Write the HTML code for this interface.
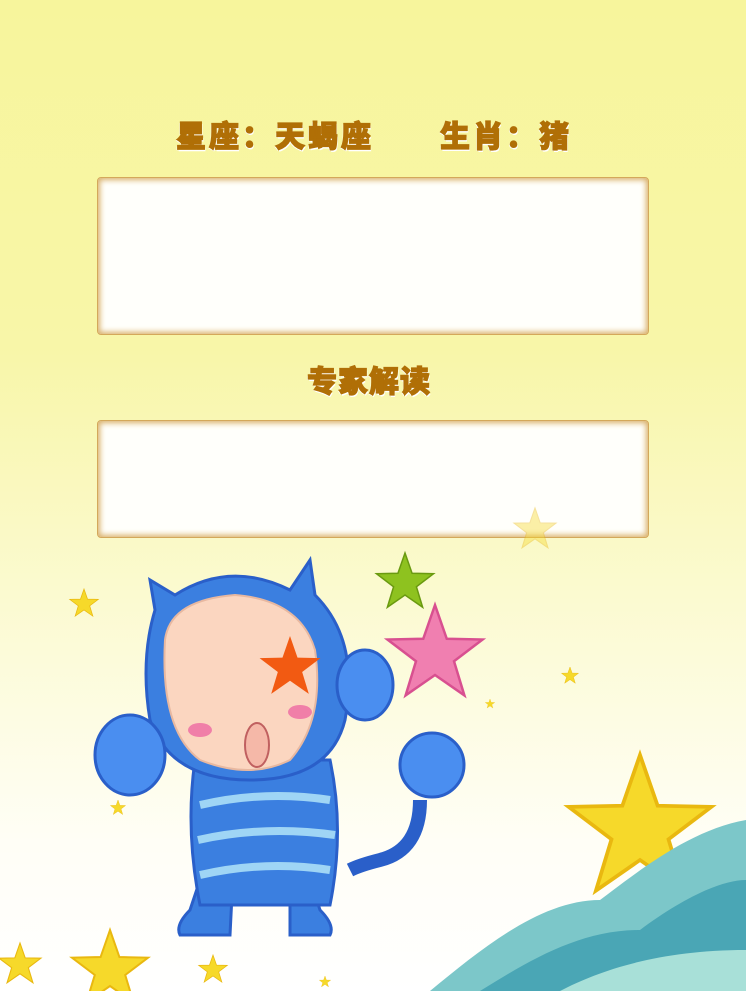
<!DOCTYPE html>
<html><head><meta charset="utf-8"><style>
html,body{margin:0;padding:0}
body{width:746px;height:991px;overflow:hidden;position:relative;background:linear-gradient(#f7f59c 0%,#f8f6a8 35%,#fbfad0 60%,#fffef6 85%,#ffffff 100%);font-family:"Liberation Sans","Noto Sans CJK SC",sans-serif}
.t{position:absolute;color:#b06f06;font-weight:900;font-size:30px;-webkit-text-stroke:1.2px #b06f06;text-shadow:1px 2px 0 #fff,-1px 1px 0 #fff;letter-spacing:3px;white-space:nowrap}
.box{position:absolute;left:97px;width:552px;background:#fffffb;border-radius:4px;box-shadow:inset 0 0 6px 2px #d9b068;border:1px solid #d4a85a;box-sizing:border-box}
svg{position:absolute;left:0;top:0}
</style></head><body>
<div class="t" style="left:176px;top:112px">星座：天蝎座</div>
<div class="t" style="left:440px;top:112px">生肖：猪</div>
<div class="box" style="top:177px;height:158px"></div>
<div class="t" style="left:307px;top:357px;letter-spacing:1px">专家解读</div>
<div class="box" style="top:420px;height:118px"></div>
<svg width="746" height="991" viewBox="0 0 746 991">
<defs><path id="st" d="M0,-1 L0.235,-0.324 0.951,-0.309 0.38,0.124 0.588,0.809 0,0.4 -0.588,0.809 -0.38,0.124 -0.951,-0.309 -0.235,-0.324Z"/></defs>
<g fill="#f6d92a" stroke="#e9b810" stroke-width="0.05">
<use href="#st" transform="translate(84,604) scale(15)"/>
<use href="#st" transform="translate(570,676) scale(9)"/>
<use href="#st" transform="translate(490,704) scale(5)"/>
<use href="#st" transform="translate(118,808) scale(8)"/>
<use href="#st" transform="translate(20,965) scale(22)"/>
<use href="#st" transform="translate(110,970) scale(40)"/>
<use href="#st" transform="translate(213,970) scale(15)"/>
<use href="#st" transform="translate(325,982) scale(6)"/>
<use href="#st" transform="translate(640,830) scale(75)"/>
<use href="#st" transform="translate(720,890) scale(30)"/>
<use href="#st" transform="translate(535,530) scale(22)" opacity="0.4"/>
</g>
<use href="#st" transform="translate(405,583) scale(30)" fill="#8ec21f" stroke="#6a9a10" stroke-width="0.05"/>
<use href="#st" transform="translate(435,655) scale(50)" fill="#f07fb0" stroke="#d85090" stroke-width="0.05"/>
<path d="M430,991 C480,950 540,900 600,900 C640,870 690,830 746,820 L746,991Z" fill="#7cc7c9"/>
<path d="M480,991 C530,960 580,930 640,930 C680,900 720,880 746,880 L746,991Z" fill="#4aa6b5"/>
<path d="M560,991 C600,970 660,950 746,950 L746,991Z" fill="#a8e0d8"/>
<g stroke="#2a5fc9" stroke-width="3">
<path d="M200,880 L190,910 Q175,925 180,935 L230,935 L232,895Z" fill="#3b7fe0"/>
<path d="M310,880 L320,910 Q335,925 330,935 L290,935 L290,895Z" fill="#3b7fe0"/>
<path d="M195,760 Q185,830 200,905 L330,905 Q345,830 330,760Z" fill="#3b7fe0"/>
<path d="M155,610 L150,580 L175,595 Q230,560 290,590 L310,560 L315,595 Q360,640 345,720 Q330,780 250,780 Q170,780 150,720 Q140,660 155,610Z" fill="#3b7fe0"/>
<ellipse cx="130" cy="755" rx="35" ry="40" fill="#4a8ef0"/>
<ellipse cx="365" cy="685" rx="28" ry="35" fill="#4a8ef0"/>
<ellipse cx="432" cy="765" rx="32" ry="32" fill="#4a8ef0"/>
<path d="M420,800 Q420,850 380,860 Q360,865 350,870" fill="none" stroke="#2a5fc9" stroke-width="14"/>
</g>
<path d="M165,640 Q170,600 235,595 Q300,600 315,650 Q325,720 290,760 Q250,780 200,760 Q160,730 165,640Z" fill="#fbd6c0" stroke="#e8b8a0" stroke-width="2"/>
<ellipse cx="257" cy="745" rx="12" ry="22" fill="#f5b8a8" stroke="#c06060" stroke-width="2"/>
<ellipse cx="200" cy="730" rx="12" ry="7" fill="#f07fa8"/>
<ellipse cx="300" cy="712" rx="12" ry="7" fill="#f07fa8"/>
<use href="#st" transform="translate(290,668) scale(32)" fill="#f25a12"/>
<g stroke="#9fd5f5" stroke-width="8" fill="none">
<path d="M200,805 Q265,790 330,800"/><path d="M198,840 Q265,825 335,835"/><path d="M200,875 Q265,860 330,870"/>
</g>
</svg>
</body></html>
